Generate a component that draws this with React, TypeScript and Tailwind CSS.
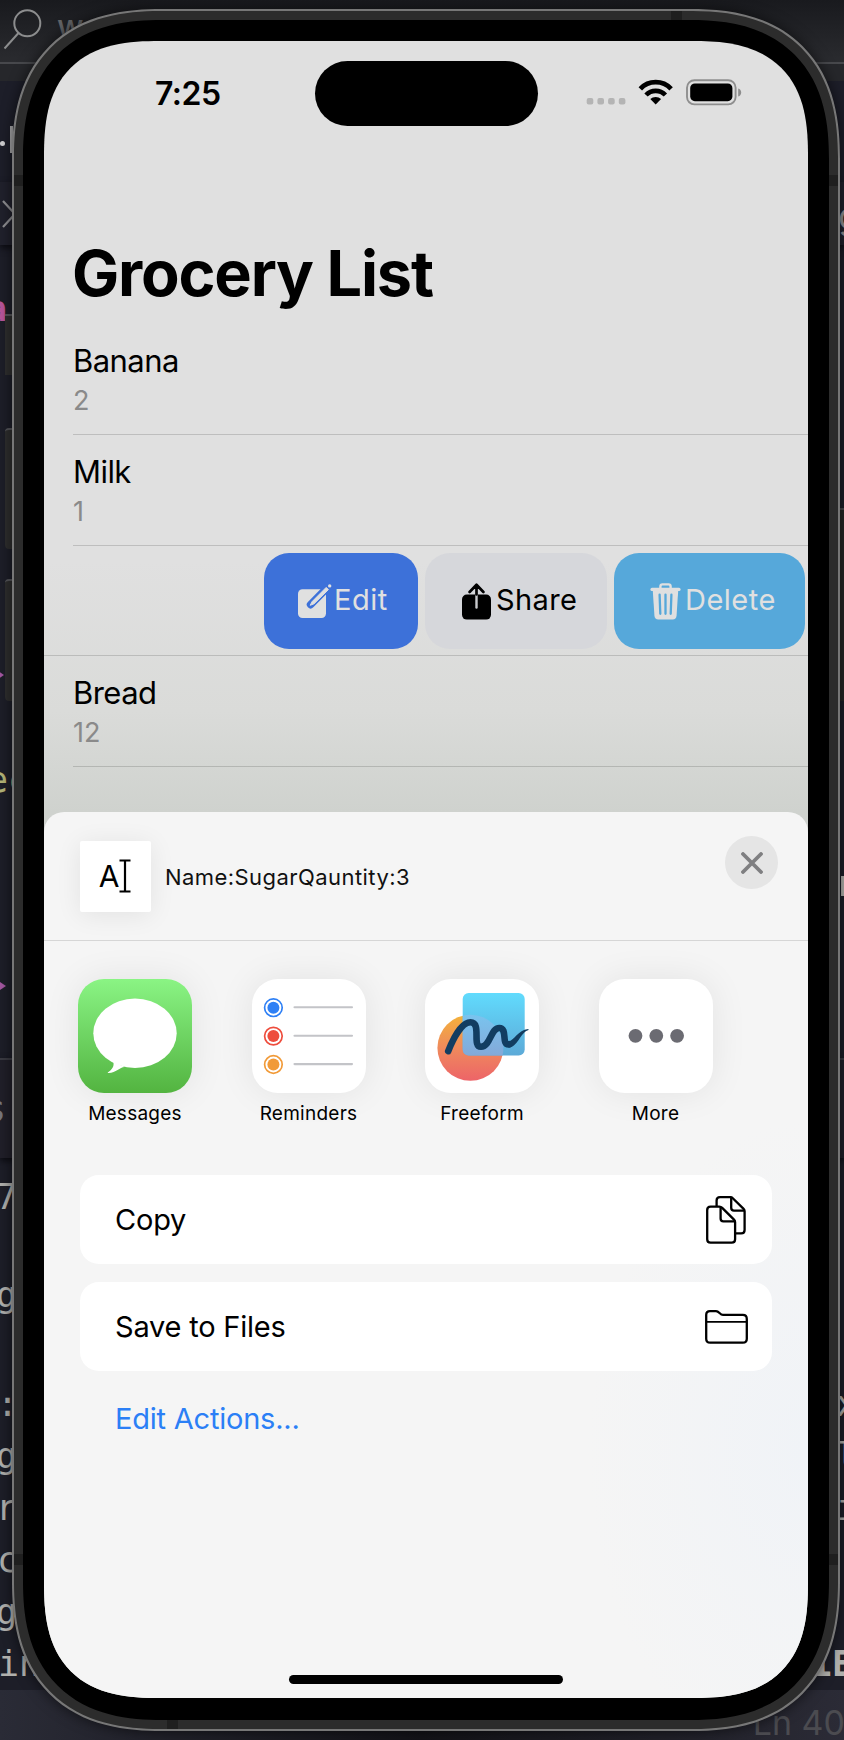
import type { ReactNode } from "react";

type CodeRow = {
  height: string;
  left?: ReactNode;
  right?: ReactNode;
  className?: string;
};

const Arrow = ({ className }: { className: string }) => (
  <svg className={className} width="8" height="10" viewBox="0 0 8 10" fill="#a357a0">
    <path d="M0 3.6H2V1L8 5L2 9V6.4H0Z" />
  </svg>
);

const editorRows: CodeRow[] = [
  { height: "h-[38px]" },
  { height: "h-[52px]", left: <span className="-ml-[14px] font-bold text-[#b8559a]">a</span> },
  { height: "h-[314px]" },
  { height: "h-[52px]", left: <Arrow className="-ml-1" /> },
  { height: "h-[53px]" },
  { height: "h-[52px]", left: <span className="-ml-[13px] text-[#b4b477]">ec</span> },
  {
    height: "h-[154px]",
    right: <span className="mt-[70px] block h-5 w-[3px] self-start bg-[#b5b3ae]" />,
  },
  { height: "h-[52px]", left: <Arrow className="-ml-[2px]" /> },
  { height: "h-[46px]" },
  {
    height: "h-[100px]",
    className: "border-t-2 border-[#3a3a42] bg-[#201f29] shadow-[0_3px_6px_#0c0c12]",
    left: <span className="-ml-[15px] text-[#77777c]">s</span>,
  },
  { height: "h-[13px]" },
  { height: "h-[52px]", left: <span className="-ml-[4px]">7</span> },
  { height: "h-[44px]" },
  { height: "h-[52px]", left: <span className="-ml-[4px] mt-1">g</span> },
  { height: "h-[59px]" },
  { height: "h-[52px]", left: <span className="-ml-[3px]">:</span>, right: <span className="-mr-[13px]">x</span> },
  { height: "h-[52px]", left: <span className="-ml-[4px]">g</span>, right: <span className="-mr-[13px]">l</span> },
  { height: "h-[52px]", left: <span className="-ml-[4px]">r</span>, right: <span className="-mr-[13px]">i</span> },
  { height: "h-[52px]", left: <span className="-ml-[3px]">c</span> },
  { height: "h-[52px]", left: <span className="-ml-[4px]">g</span> },
  { height: "h-[52px]", left: <span className="-ml-[2px]">in</span>, right: <span className="-mr-[9px] font-bold">1E</span> },
];

function EditorBackdrop() {
  return (
    <div className="flex h-full w-full flex-col bg-[#1d1e28] font-['DejaVu_Sans_Mono',monospace] text-[35px] leading-[52px] text-[#b0b0ad]">
      <div className="flex h-[64px] shrink-0 items-start border-b-2 border-[#47484c] bg-gradient-to-b from-[#191a1e] to-[#2a2b2f] pt-[9px]">
        <svg className="ml-1 shrink-0" width="38" height="41" viewBox="0 0 38 41" fill="none" stroke="#8c8d8e" strokeWidth="2">
          <circle cx="23.3" cy="14.3" r="13" />
          <path d="M14.5 24L0.5 39.5" />
        </svg>
        <span className="ml-[15px] mt-px font-['Inter',sans-serif] text-[32px] font-medium leading-[34px] text-[#626366]">w</span>
      </div>
      <div className="h-[17px] shrink-0 bg-[#26272b]" />
      <div className="flex h-[101px] shrink-0 items-center bg-[#1d1e29] text-[#c4c4c6]">
        <span className="mt-[23px] h-[5px] w-[5px] rounded-full bg-[#d0d0d2]" />
        <span className="ml-[5px] mt-[15px] h-[27px] w-[3px] bg-[#a9a9ab]" />
      </div>
      <div className="flex h-[63px] shrink-0 items-center justify-between bg-[#20212c] shadow-[0_3px_6px_#0c0c12]">
        <svg className="ml-[2px]" width="14" height="30" viewBox="0 0 14 30" fill="none" stroke="#8f8f93" strokeWidth="2.2">
          <path d="M1 2L13 15L1 28" />
        </svg>
        <span className="-mr-[16px] mt-1 font-['Inter',sans-serif] text-[36px] text-[#8f8f93]">g</span>
      </div>
      {editorRows.map((row, i) => (
        <div key={i} className={`flex shrink-0 items-center justify-between ${row.height} ${row.className ?? ""}`}>
          {row.left ?? <span />}
          {row.right}
        </div>
      ))}
      <div className="flex flex-1 items-end justify-end bg-gradient-to-r from-[#2a2b36] via-[#131318] to-[#2b2b36]">
        <span className="-mr-px mb-px font-['Inter',sans-serif] text-[34px] leading-[33px] text-[#4b4b50]">Ln 40</span>
      </div>
    </div>
  );
}

function StatusIcons() {
  return (
    <svg width="156" height="27" viewBox="0 0 156 27" fill="none">
      <g fill="#b4b4b4">
        <rect x="0.7" y="19" width="6.6" height="6.6" rx="2" />
        <rect x="11.4" y="19" width="6.6" height="6.6" rx="2" />
        <rect x="22.1" y="19" width="6.6" height="6.6" rx="2" />
        <rect x="32.8" y="19" width="6.6" height="6.6" rx="2" />
      </g>
      <g transform="translate(52.7 0.5)">
        <path d="M1.6 9.3A21.2 21.2 0 0 1 32.4 9.3" stroke="#000" strokeWidth="4.8" />
        <path d="M7.3 15.5A13.4 13.4 0 0 1 26.7 15.5" stroke="#000" strokeWidth="4.6" />
        <path d="M11.6 19.6A7.8 7.8 0 0 1 22.4 19.6L17 25Z" fill="#000" />
      </g>
      <rect x="101" y="1.2" width="48.6" height="24.2" rx="7.5" stroke="#8e8e8e" strokeWidth="1.9" />
      <rect x="104.2" y="4.4" width="42.2" height="17.8" rx="4.6" fill="#000" />
      <path d="M152.2 9.4C156.2 10.5 156.2 16.5 152.2 17.6Z" fill="#8e8e8e" />
    </svg>
  );
}

function StatusBar() {
  return (
    <div className="flex h-[85px] shrink-0 items-start pt-5">
      <div className="flex h-[65px] w-[271px] items-center pl-[111px] text-[32px] font-semibold tracking-[-0.5px]">7:25</div>
      <div className="h-[65px] w-[223px] rounded-full bg-black" />
      <div className="ml-12 mt-[18px]">
        <StatusIcons />
      </div>
    </div>
  );
}

function ListRow({ name, quantity }: { name: string; quantity: string }) {
  return (
    <div className="ml-[29px] flex h-[111px] shrink-0 flex-col gap-[3px] border-b border-black/15 pt-[17px]">
      <div className="text-[31px] leading-10 tracking-[-0.55px]">{name}</div>
      <div className="mt-px text-[27px] leading-8 text-[#8a8a8a]">{quantity}</div>
    </div>
  );
}

function SwipeActions() {
  return (
    <div className="flex h-[110px] shrink-0 items-start justify-end gap-[7px] border-b border-black/15 pr-[3px] pt-[7px] text-[29px] leading-none tracking-[0.5px]">
      <div className="flex h-[96px] w-[154px] items-center rounded-[25px] bg-[#3d71d9] pl-[34px] text-[#e0e0e0]">
        <svg className="shrink-0" width="34" height="35" viewBox="0 0 34 35" fill="none">
          <rect x="0" y="5.3" width="28" height="28.7" rx="4.5" fill="#e0e0e0" />
          <path d="M12.6 20.6L30 3" stroke="#3d71d9" strokeWidth="7.6" strokeLinecap="round" />
          <path d="M12.2 21.3L14.2 17.5L28.2 3.4L30.4 5.6L16 19.8Z" fill="#e0e0e0" stroke="#e0e0e0" strokeLinejoin="round" />
          <circle cx="31.7" cy="1.9" r="1.7" fill="#e0e0e0" />
        </svg>
        <span className="mb-[4px] ml-[2px]">Edit</span>
      </div>
      <div className="flex h-[96px] w-[182px] items-center rounded-[25px] bg-[#d6d7db] pl-[37px] tracking-[0.4px] text-black">
        <svg className="shrink-0" width="29" height="37" viewBox="0 0 29 37" fill="none">
          <rect x="0" y="11.6" width="29" height="25" rx="4.8" fill="#000" />
          <path d="M14.5 11.5V24.5" stroke="#c9cacd" strokeWidth="2.4" strokeLinecap="round" />
          <path d="M14.5 11.5V2M7.6 9L14.5 1.8L21.4 9" stroke="#000" strokeWidth="2.7" strokeLinecap="round" strokeLinejoin="round" />
        </svg>
        <span className="mb-[4px] ml-[5px]">Share</span>
      </div>
      <div className="flex h-[96px] w-[191px] items-center rounded-[25px] bg-[#56a8da] pl-9 text-[#e0e0e0]">
        <svg className="shrink-0" width="31" height="37" viewBox="0 0 31 37" fill="none">
          <path d="M10.4 6V3.4Q10.4 1.4 12.4 1.4H18.6Q20.6 1.4 20.6 3.4V6" stroke="#e0e0e0" strokeWidth="2.4" />
          <rect x="0.4" y="4.8" width="30.2" height="3.2" rx="1.6" fill="#e0e0e0" />
          <path d="M2.8 7.5H28.2L26.6 32.6Q26.3 36.6 22.6 36.6H8.4Q4.7 36.6 4.4 32.6Z" fill="#e0e0e0" />
          <path d="M9.6 11.6L10.3 30.8M15.5 11.6V30.8M21.4 11.6L20.7 30.8" stroke="#56a8da" strokeWidth="2.3" strokeLinecap="round" />
        </svg>
        <span className="mb-[4px] ml-[4px]">Delete</span>
      </div>
    </div>
  );
}

function MessagesIcon() {
  return (
    <svg width="114" height="114" viewBox="0 0 114 114" fill="#fff">
      <ellipse cx="57" cy="54.3" rx="41.7" ry="34.7" />
      <path d="M29.8 93.4C33.5 91 36.6 87.5 35.3 83L47 88C42 87.5 38 94.4 29.8 93.9Z" />
    </svg>
  );
}

const reminderColors = ["#2f80f5", "#ee4d3d", "#f19a38"];

function RemindersIcon() {
  return (
    <svg width="114" height="114" viewBox="0 0 114 114" fill="none">
      {reminderColors.map((color, i) => (
        <g key={color} transform={`translate(0 ${28.7 + i * 28.4})`}>
          <circle cx="21.4" cy="0" r="8.8" stroke={color} strokeWidth="1.7" />
          <circle cx="21.4" cy="0" r="6" fill={color} />
          <path d="M42.5 -0.4H100" stroke="#c3c4c8" strokeWidth="2.1" strokeLinecap="round" />
        </g>
      ))}
    </svg>
  );
}

function FreeformIcon() {
  return (
    <svg width="114" height="114" viewBox="0 0 114 114" fill="none">
      <defs>
        <linearGradient id="ball" x1="0" y1="0" x2="0" y2="1">
          <stop offset="0" stopColor="#f3b23a" />
          <stop offset="0.5" stopColor="#ef8a5c" />
          <stop offset="1" stopColor="#ed6468" />
        </linearGradient>
        <linearGradient id="note" x1="0" y1="0" x2="0" y2="1">
          <stop offset="0" stopColor="#61dbfd" />
          <stop offset="1" stopColor="#5daad8" />
        </linearGradient>
        <linearGradient id="overlap" x1="0" y1="0" x2="0" y2="1">
          <stop offset="0" stopColor="#7cc3ee" />
          <stop offset="0.6" stopColor="#87aada" />
        </linearGradient>
        <clipPath id="noteClip">
          <rect x="37.7" y="14" width="62" height="62.4" rx="6" />
        </clipPath>
      </defs>
      <circle cx="45.4" cy="68.8" r="33" fill="url(#ball)" />
      <rect x="37.7" y="14" width="62" height="62.4" rx="6" fill="url(#note)" />
      <circle cx="45.4" cy="68.8" r="33" fill="url(#overlap)" opacity="0.9" clipPath="url(#noteClip)" />
      <path
        d="M23.2 72.2C28 60 36.5 43.3 45.5 43.3C57 43.3 46.5 67.8 56 67.8C65.5 67.8 65.5 49 74.3 49C83 49 76 65.4 83.6 65.4"
        stroke="#123d61"
        strokeWidth="6.6"
        strokeLinecap="round"
      />
      <path d="M83.6 62.1C89 62 93 50.6 103.2 49.9C103.8 50 103.7 51 103 51.2C96 53 92 68.7 83.6 68.7Z" fill="#123d61" />
    </svg>
  );
}

function MoreIcon() {
  return (
    <svg width="114" height="114" viewBox="0 0 114 114" fill="#6b6b72">
      <circle cx="36.5" cy="56.8" r="6.9" />
      <circle cx="57.3" cy="56.8" r="6.9" />
      <circle cx="78.1" cy="56.8" r="6.9" />
    </svg>
  );
}

const apps = [
  { name: "Messages", icon: <MessagesIcon />, tile: "bg-gradient-to-b from-[#8af484] to-[#53b440]" },
  { name: "Reminders", icon: <RemindersIcon />, tile: "bg-white" },
  { name: "Freeform", icon: <FreeformIcon />, tile: "bg-white" },
  { name: "More", icon: <MoreIcon />, tile: "bg-white" },
];

function CopyIcon() {
  return (
    <svg width="40" height="48" viewBox="0 0 40 48" fill="none" stroke="#000" strokeWidth="2.3" strokeLinejoin="round">
      <path d="M10.6 10.5V4.6Q10.6 1.2 14 1.2H24.6Q25.8 1.2 26.8 2.2L37.6 12.9Q38.6 13.9 38.6 15.2V34Q38.6 37.4 35.2 37.4H29.2" />
      <path d="M25.2 1.4V11.8Q25.2 14.6 28 14.6H38.4" />
      <path d="M4.6 10.7H13.4Q15 10.7 16.2 11.9L28 23.6Q29.1 24.7 29.1 26.2V43.2Q29.1 46.6 25.7 46.6H4.6Q1.2 46.6 1.2 43.2V14.1Q1.2 10.7 4.6 10.7Z" />
      <path d="M14.6 10.9V22.6Q14.6 25.4 17.4 25.4H28.9" />
    </svg>
  );
}

function FolderIcon() {
  return (
    <svg width="43" height="34" viewBox="0 0 43 34" fill="none" stroke="#000" strokeWidth="2.3" strokeLinejoin="round">
      <path d="M5 1.2H11C14.2 1.2 14.8 4.9 18 4.9H37.8Q41.8 4.9 41.8 8.9V28.7Q41.8 32.7 37.8 32.7H5.2Q1.2 32.7 1.2 28.7V5Q1.2 1.2 5 1.2Z" />
      <path d="M1.2 11.9H41.8" strokeWidth="1.9" />
    </svg>
  );
}

function ShareSheet() {
  return (
    <div className="flex flex-1 flex-col rounded-t-[20px] bg-[#f5f5f5] bg-[radial-gradient(ellipse_220px_330px_at_100%_72%,#f0f3f7,#f5f5f5)]">
      <div className="flex h-[129px] shrink-0 items-center border-b border-[#d6d6d6] pl-9">
        <div className="flex h-[71px] w-[71px] items-center justify-center rounded-[2px] bg-white pr-px shadow-[0_3px_26px_rgba(0,0,0,0.08)]">
          <span className="text-[30px] leading-none">A</span>
          <svg width="12" height="34" viewBox="0 0 12 34" fill="none" stroke="#000">
            <path d="M0.5 1.5H11.5M0.5 32.5H11.5" strokeWidth="2" />
            <path d="M6 1.5V32.5" strokeWidth="2.2" />
          </svg>
        </div>
        <span className="ml-[14px] mt-[2px] text-[22px] tracking-[0.44px] text-[#111]">Name:SugarQauntity:3</span>
        <div className="ml-auto mr-[30px] mt-6 flex h-[53px] w-[53px] items-center justify-center self-start rounded-full bg-[#e5e5e5]">
          <svg width="22" height="22" viewBox="0 0 22 22" fill="none" stroke="#7f7f81" strokeWidth="3.8" strokeLinecap="round">
            <path d="M2 2L20 20M20 2L2 20" />
          </svg>
        </div>
      </div>
      <div className="flex shrink-0 gap-[59.5px] pl-[34px] pt-[38px]">
        {apps.map((app) => (
          <div key={app.name} className="flex w-[114px] flex-col items-center">
            <div className={`h-[114px] w-[114px] overflow-hidden rounded-[26px] shadow-[0_0_36px_rgba(0,0,0,0.08)] ${app.tile}`}>{app.icon}</div>
            <span className="mt-[9px] text-[19px] leading-6 tracking-[0.25px]">{app.name}</span>
          </div>
        ))}
      </div>
      <div className="mx-9 mt-[49px] flex shrink-0 flex-col gap-[18px] text-[29px] tracking-[-0.22px]">
        <div className="flex h-[89px] items-center justify-between rounded-[19px] bg-white pl-[35px] pr-[26px]">
          Copy
          <CopyIcon />
        </div>
        <div className="flex h-[89px] items-center justify-between rounded-[19px] bg-white pl-[35px] pr-[24px]">
          Save to Files
          <FolderIcon />
        </div>
        <div className="mt-[10px] pl-[35px] leading-10 text-[#2b7ff6]">Edit Actions...</div>
      </div>
      <div className="mb-[14px] mt-auto h-[9px] w-[274px] self-center rounded-full bg-black" />
    </div>
  );
}

function Screen() {
  return (
    <div className="flex h-full flex-col overflow-hidden rounded-[116px] bg-[linear-gradient(to_bottom,#e0e0e0_520px,#dadbd9_670px,#cfd2ce_771px)] font-['Inter','Liberation_Sans',sans-serif] text-black [corner-shape:superellipse(1.4)]">
      <StatusBar />
      <h1 className="ml-[28px] mt-[107px] shrink-0 text-[63px] font-bold leading-[80px] tracking-[-1.2px]">Grocery List</h1>
      <div className="mb-[45px] mt-[11px] flex shrink-0 flex-col">
        <ListRow name="Banana" quantity="2" />
        <ListRow name="Milk" quantity="1" />
        <SwipeActions />
        <ListRow name="Bread" quantity="12" />
      </div>
      <ShareSheet />
    </div>
  );
}

export default function App() {
  return (
    <div className="relative h-[1740px] w-[844px] overflow-hidden">
      <EditorBackdrop />
      <div className="absolute right-0 top-[508px] h-[193px] w-[6px] border-t-2 border-[#47474b] bg-[#272625]" />
      <div className="absolute left-[5px] top-[314px] h-[61px] w-3 border-t-2 border-[#55565a] bg-[#2e2e2e]" />
      <div className="absolute left-[5px] top-[428px] h-[121px] w-3 rounded-l-sm border-t-2 border-[#55565a] bg-[#2e2e2e]" />
      <div className="absolute left-[5px] top-[579px] h-[122px] w-3 rounded-l-sm border-t-2 border-[#55565a] bg-[#2e2e2e]" />
      <div className="absolute left-3 top-[9px] h-[1722px] w-[828px] rounded-[150px] border-2 border-[#777] bg-[#2c2c2c] p-[9px] shadow-[0_0_14px_rgba(0,0,0,0.6)] [corner-shape:superellipse(1.28)]">
        <div className="absolute left-0 top-[164px] h-[11px] w-[9px] bg-[#1f1f1f]" />
        <div className="absolute right-0 top-[164px] h-[11px] w-[9px] bg-[#1f1f1f]" />
        <div className="absolute left-0 top-[1543px] h-[11px] w-[9px] bg-[#1f1f1f]" />
        <div className="absolute right-0 top-[1543px] h-[11px] w-[9px] bg-[#1f1f1f]" />
        <div className="absolute left-[657px] top-0 h-[9px] w-[11px] bg-[#1f1f1f]" />
        <div className="absolute bottom-0 left-[153px] h-[9px] w-[11px] bg-[#1f1f1f]" />
        <div className="relative h-full rounded-[139px] bg-black px-[21px] pb-[22px] pt-[21px] [corner-shape:superellipse(1.28)]">
          <Screen />
        </div>
      </div>
    </div>
  );
}
